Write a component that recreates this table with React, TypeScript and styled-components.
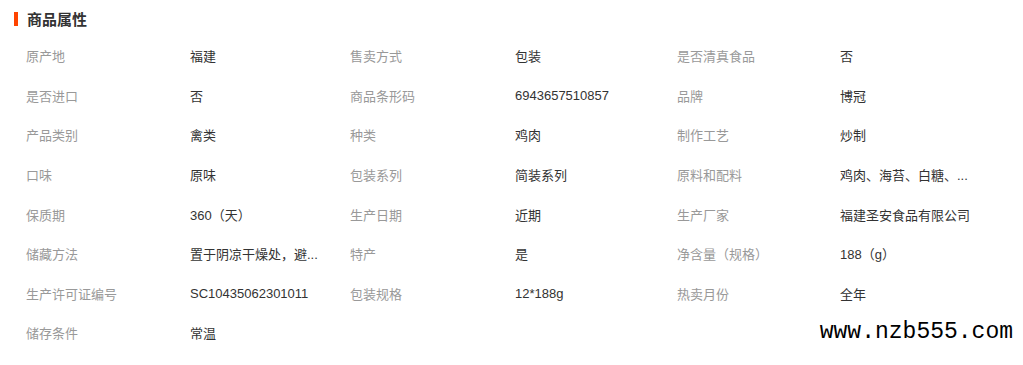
import React from 'react';
import styled, { createGlobalStyle } from 'styled-components';

const attrs: [string, string][] = [
  ['原产地', '福建'],
  ['售卖方式', '包装'],
  ['是否清真食品', '否'],
  ['是否进口', '否'],
  ['商品条形码', '6943657510857'],
  ['品牌', '博冠'],
  ['产品类别', '禽类'],
  ['种类', '鸡肉'],
  ['制作工艺', '炒制'],
  ['口味', '原味'],
  ['包装系列', '简装系列'],
  ['原料和配料', '鸡肉、海苔、白糖、...'],
  ['保质期', '360（天）'],
  ['生产日期', '近期'],
  ['生产厂家', '福建圣安食品有限公司'],
  ['储藏方法', '置于阴凉干燥处，避...'],
  ['特产', '是'],
  ['净含量（规格）', '188（g）'],
  ['生产许可证编号', 'SC10435062301011'],
  ['包装规格', '12*188g'],
  ['热卖月份', '全年'],
  ['储存条件', '常温'],
];

const App: React.FC = () => {
  return (
    <>
      <GlobalStyle />
      <Page>
        <Title>商品属性</Title>
        <AttrGrid>
          {attrs.map(([label, value]) => (
            <React.Fragment key={label}>
              <Label>{label}</Label>
              <Value>{value}</Value>
            </React.Fragment>
          ))}
        </AttrGrid>
        <Watermark>www.nzb555.com</Watermark>
      </Page>
    </>
  );
};

const GlobalStyle = createGlobalStyle`
  html, body {
    margin: 0;
    padding: 0;
    background: #fff;
  }
  body {
    font-family: "Liberation Sans", "Noto Sans CJK SC", sans-serif;
  }
`;

const Page = styled.div`
  position: relative;
  width: 1023px;
  height: 365px;
  background: #fff;
  overflow: hidden;
`;

const Title = styled.h3`
  display: flex;
  align-items: center;
  gap: 9px;
  margin: 0;
  padding: 1px 0 0 14px;
  height: 35px;
  font-size: 15px;
  font-weight: bold;
  color: #333;

  &::before {
    content: '';
    width: 4px;
    height: 14px;
    background: #ff4400;
  }
`;

const AttrGrid = styled.div`
  display: grid;
  grid-template-columns: 164px 160px 165px 162px 163px 1fr;
  grid-auto-rows: 39.6px;
  padding-left: 26px;
  align-items: center;
  font-size: 13px;
`;

const Label = styled.div`
  color: #999;
  white-space: nowrap;
`;

const Value = styled.div`
  color: #333;
  white-space: nowrap;
`;

const Watermark = styled.div`
  position: absolute;
  right: 10px;
  bottom: 20px;
  font-family: "Liberation Mono", monospace;
  font-size: 23px;
  color: #000;
`;

export default App;
